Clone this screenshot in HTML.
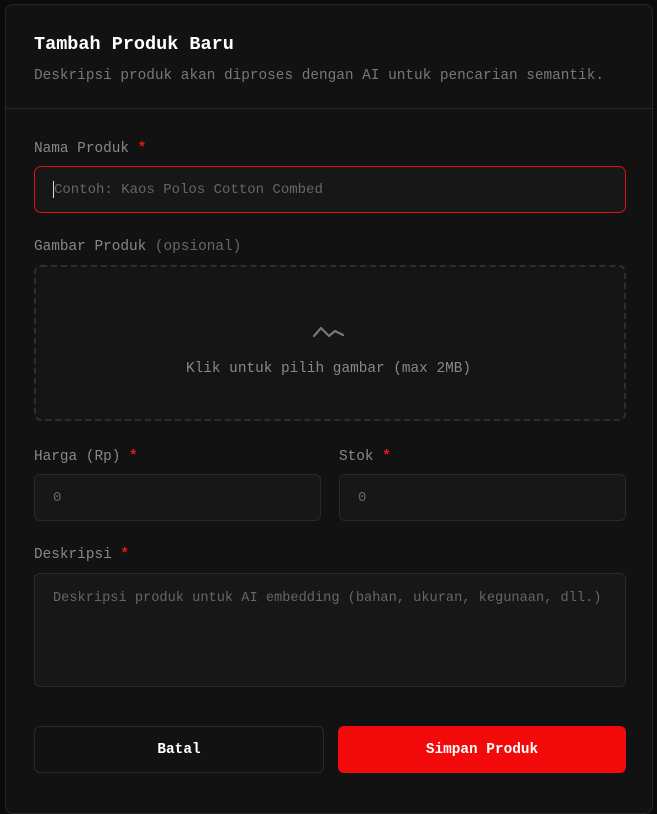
<!DOCTYPE html>
<html><head><style>
*{box-sizing:border-box;margin:0;padding:0}
body{width:657px;height:800px;background:#0b0b0b;font-family:"Liberation Mono",monospace;color:#e5e5e5;overflow:hidden;position:relative}
.card{position:absolute;left:5px;top:4px;width:648px;height:810px;background:#121212;border:1px solid #262626;border-radius:8px}
.a{position:absolute;white-space:nowrap}
.t{left:34px;top:34px;font-size:18.5px;font-weight:bold;color:#fff}
.d{left:34px;top:68px;font-size:14.4px;color:#777}
.hr{left:5px;top:108px;width:648px;height:1px;background:#262626}
.l{font-size:14.4px;color:#888}
.l b{color:#f01515;font-weight:bold}
.in{background:#171717;border:1px solid #2a2a2a;border-radius:6px;font-size:14px;color:#666;padding-left:18px;display:flex;align-items:center}
.btn{border-radius:6px;display:flex;align-items:center;justify-content:center;font-size:14.4px;font-weight:bold;color:#fff}
</style></head><body>
<div class="card"></div>
<div class="a t">Tambah Produk Baru</div>
<div class="a d">Deskripsi produk akan diproses dengan AI untuk pencarian semantik.</div>
<div class="a hr"></div>
<div class="a l" style="left:34px;top:141px">Nama Produk <b>*</b></div>
<div class="a in" style="left:34px;top:166px;width:592px;height:47px;border:1px solid #e01010;border-radius:7px"><span style="border-left:1px solid #ddd;height:17px;display:inline-block"></span>Contoh: Kaos Polos Cotton Combed</div>
<div class="a l" style="left:34px;top:239px">Gambar Produk <span style="color:#666">(opsional)</span></div>
<div class="a" style="left:34px;top:265px;width:592px;height:156px;border:2px dashed #2e2e2e;border-radius:7px;background:#151515"></div>
<svg class="a" style="left:312px;top:323px" width="36" height="18" viewBox="0 0 36 18"><path d="M2 13 L9 5 L17 13 L23 8 L31 12" fill="none" stroke="#777" stroke-width="2.2" stroke-linejoin="round" stroke-linecap="round"/></svg>
<div class="a" style="left:0;width:657px;text-align:center;top:361px;font-size:14.4px;color:#888">Klik untuk pilih gambar (max 2MB)</div>
<div class="a l" style="left:34px;top:449px">Harga (Rp) <b>*</b></div>
<div class="a l" style="left:339px;top:449px">Stok <b>*</b></div>
<div class="a in" style="left:34px;top:474px;width:287px;height:47px">0</div>
<div class="a in" style="left:339px;top:474px;width:287px;height:47px">0</div>
<div class="a l" style="left:34px;top:547px">Deskripsi <b>*</b></div>
<div class="a in" style="left:34px;top:573px;width:592px;height:114px;align-items:flex-start;padding-top:17px;font-size:13.65px;overflow:hidden">Deskripsi produk untuk AI embedding (bahan, ukuran, kegunaan, dll.)</div>
<div class="a btn" style="left:34px;top:726px;width:290px;height:47px;background:#121212;border:1px solid #2a2a2a">Batal</div>
<div class="a btn" style="left:338px;top:726px;width:288px;height:47px;background:#f20a0a">Simpan Produk</div>
</body></html>
